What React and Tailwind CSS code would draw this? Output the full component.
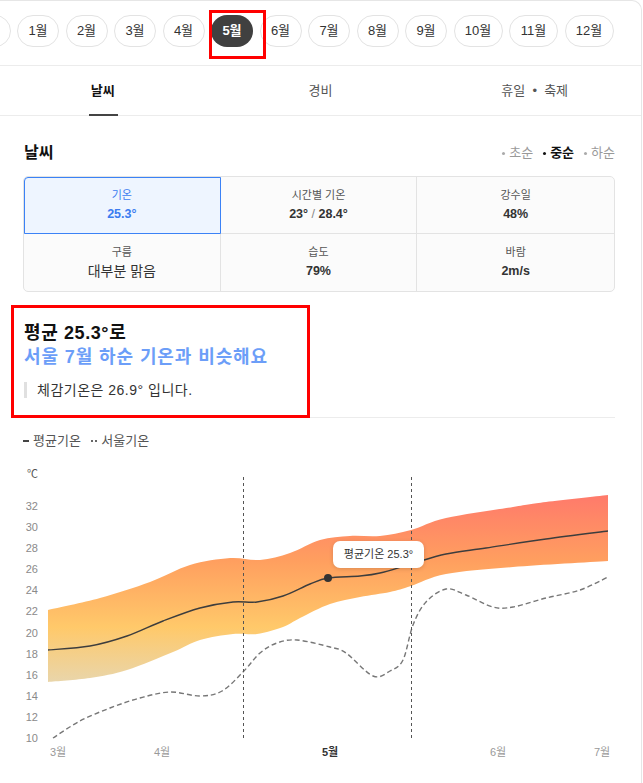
import React from "react";

const upper = [[48,610],[100,598],[150,582],[190,565],[230,558],[260,560],[290,553],[320,540],[350,536],[380,536],[411,530],[446,518],[513,507],[546,502],[608,495]];
const lower = [[48,682],[90,678],[127,670],[173,652],[200,640],[233,634],[257,634],[283,627],[300,618],[330,604],[360,597],[390,592],[411,586],[446,574],[513,567],[608,561]];
const mean = [[48,650],[90,646],[127,636],[163,621],[200,608],[233,602],[257,602],[283,596],[310,584],[328,578],[360,576],[380,573],[411,564],[446,554],[486,548],[546,539],[608,531]];
const seoul = [[53,738],[80,721],[110,708],[140,698],[170,692],[200,696],[222,691],[243,672],[260,653],[277,643],[297,640],[330,647],[346,653],[373,676],[390,671],[403,660],[413,625],[426,602],[446,589],[466,595],[493,607],[513,607],[546,598],[580,590],[608,577]];

function curve(p, move = true) {
  let d = (move ? "M" : "L") + p[0][0] + "," + p[0][1];
  for (let i = 0; i < p.length - 1; i++) {
    const p0 = p[i - 1] || p[i];
    const p1 = p[i];
    const p2 = p[i + 1];
    const p3 = p[i + 2] || p2;
    const c1x = p1[0] + (p2[0] - p0[0]) / 6;
    const c1y = p1[1] + (p2[1] - p0[1]) / 6;
    const c2x = p2[0] - (p3[0] - p1[0]) / 6;
    const c2y = p2[1] - (p3[1] - p1[1]) / 6;
    d += ` C${c1x},${c1y} ${c2x},${c2y} ${p2[0]},${p2[1]}`;
  }
  return d;
}

const months = ["1월","2월","3월","4월","5월","6월","7월","8월","9월","10월","11월","12월"];
const FONT = "'Liberation Sans', 'Noto Sans CJK KR', sans-serif";

function Chart() {
  const band = curve(upper) + " " + curve([...lower].reverse(), false) + " Z";
  const yl = [32,30,28,26,24,22,20,18,16,14,12,10];
  const xl = [["3월",58,false],["4월",162,false],["5월",330,true],["6월",498,false],["7월",602,false]];
  return (
    <div className="relative h-[328px]">
      <svg width="643" height="328" viewBox="0 455 643 328" className="block">
        <defs>
          <linearGradient id="bandg" gradientUnits="userSpaceOnUse" x1="0" y1="495" x2="0" y2="684">
            <stop offset="0" stopColor="#ff7a6b" />
            <stop offset="0.35" stopColor="#ff9f5f" />
            <stop offset="0.7" stopColor="#ffc96a" />
            <stop offset="1" stopColor="#e8d6ad" />
          </linearGradient>
        </defs>
        <text x="27" y="478" fontSize="11" fill="#555" fontFamily={FONT}>℃</text>
        {yl.map((v, i) => (
          <text key={v} x="38" y={510 + i * 21.09} fontSize="11" fill="#8a8a8a" textAnchor="end" fontFamily={FONT}>{v}</text>
        ))}
        <path d={band} fill="url(#bandg)" />
        <path d={curve(mean)} fill="none" stroke="#3d3d3d" strokeWidth="1.4" />
        <path d={curve(seoul)} fill="none" stroke="#777" strokeWidth="1.4" strokeDasharray="5 3" />
        <line x1="243.5" y1="477" x2="243.5" y2="738" stroke="#555" strokeWidth="1" strokeDasharray="3 3" />
        <line x1="411.5" y1="477" x2="411.5" y2="738" stroke="#555" strokeWidth="1" strokeDasharray="3 3" />
        <circle cx="328" cy="578" r="4" fill="#333" />
        {xl.map(([t, x, b]) => (
          <text key={t} x={x} y="756" fontSize="11" textAnchor="middle" fill={b ? "#333" : "#999"} fontWeight={b ? 700 : 400} fontFamily={FONT}>{t}</text>
        ))}
      </svg>
      <div className="absolute left-[333px] top-[86px] w-[91px] h-[27px] bg-white rounded-[7px] shadow-[0_1px_4px_rgba(0,0,0,0.15)] flex items-center justify-center text-[11px] text-[#333] leading-none">
        평균기온 25.3°
      </div>
    </div>
  );
}

function Cell({ label, value, active, big, border }) {
  return (
    <div className={`flex flex-col items-center justify-center h-[57px] ${border} ${active ? "bg-[#eef5ff] outline outline-1 outline-[#3b82f6] -outline-offset-1 rounded-tl-[4px] relative" : ""}`}>
      <div className={`text-[11px] leading-[16px] ${active ? "text-[#3b7cf0]" : "text-[#555]"}`}>{label}</div>
      <div className={`${big ? "text-[14px] font-normal leading-[20px]" : "text-[12.5px] font-semibold leading-[20px]"} mt-[1px] ${active ? "text-[#3b7cf0]" : "text-[#333]"}`}>{value}</div>
    </div>
  );
}

function Dot({ dark }) {
  return <span className={`inline-block w-[3px] h-[3px] rounded-full mr-[4px] ${dark ? "bg-[#111]" : "bg-[#aaa]"}`} />;
}

export default function App() {
  return (
    <div className="w-[643px] h-[783px] overflow-hidden bg-white relative" style={{ fontFamily: FONT }}>
      <div className="w-[642px] h-[783px] border-r border-t border-[#e6e6e6] rounded-tr-[10px] overflow-hidden">
        {/* month bar */}
        <div className="h-[65px] border-b border-[#ececec] flex items-start pt-[14px]">
          <div className="flex gap-[6.5px] ml-[-31.5px]">
            <div className="w-[42px] h-[32px] rounded-full border border-[#e3e3e3]" />
            {months.map((m) => {
              const active = m === "5월";
              const w = m.length > 2 ? "w-[49px]" : "w-[42px]";
              return (
                <div key={m} className={`${w} h-[32px] rounded-full flex items-center justify-center text-[13px] ${active ? "bg-[#404040] text-white font-bold" : "border border-[#e3e3e3] text-[#333]"}`}>
                  {m}
                </div>
              );
            })}
          </div>
        </div>
        {/* tabs */}
        <div className="h-[50px] border-b border-[#ececec] grid grid-cols-3">
          <div className="flex justify-center">
            <div className="relative h-full flex items-center px-[1px] text-[13px] font-bold text-[#111] mr-[8px]">
              날씨
              <div className="absolute left-[-1px] right-[-2px] bottom-[-1px] h-[2px] bg-[#444]" />
            </div>
          </div>
          <div className="flex items-center justify-center text-[13px] text-[#555]">경비</div>
          <div className="flex items-center justify-center text-[13px] text-[#555] ml-[1px]">휴일 &nbsp;•&nbsp; 축제</div>
        </div>
        {/* weather */}
        <div className="pl-[23px] pr-[26px] pt-[25px]">
          <div className="flex items-center justify-between h-[24px] pl-[1px]">
            <div className="text-[16px] font-bold text-[#111]">날씨</div>
            <div className="flex items-center gap-[10px] text-[13px]">
              <span className="flex items-center text-[#999]"><Dot />초순</span>
              <span className="flex items-center text-[#111] font-bold"><Dot dark />중순</span>
              <span className="flex items-center text-[#999]"><Dot />하순</span>
            </div>
          </div>
          <div className="mt-[11px] border border-[#e3e3e3] rounded-[5px] bg-[#fbfbfb] grid grid-cols-3">
            <Cell label="기온" value="25.3°" active border="border-r border-b border-[#e3e3e3]" />
            <Cell label="시간별 기온" value={<span>23° <span className="font-normal text-[#888]">/</span> 28.4°</span>} border="border-r border-b border-[#e3e3e3]" />
            <Cell label="강수일" value="48%" border="border-b border-[#e3e3e3]" />
            <Cell label="구름" value="대부분 맑음" big border="border-r border-[#e3e3e3]" />
            <Cell label="습도" value="79%" border="border-r border-[#e3e3e3]" />
            <Cell label="바람" value="2m/s" border="" />
          </div>
          {/* highlight */}
          <div className="pt-[29px] pb-[17px] border-b border-[#ececec] pl-[1px]">
            <div className="text-[18px] font-bold leading-[24px] tracking-[0.6px] text-[#111]">평균 25.3°로</div>
            <div className="text-[18px] font-bold leading-[24px] tracking-[0.9px] text-[#6c9ef8]">서울 7월 하순 기온과 비슷해요</div>
            <div className="mt-[11px] flex items-center h-[20px]">
              <div className="w-[3px] h-[16px] bg-[#e0e0e0]" />
              <div className="ml-[10px] text-[14px] tracking-[0.5px] text-[#333]">체감기온은 26.9° 입니다.</div>
            </div>
          </div>
          <div className="mt-[14px] flex items-center h-[18px] text-[13px] text-[#555]">
            <span className="w-[6px] h-[2.5px] bg-[#444] mr-[4px]" />
            <span>평균기온</span>
            <span className="ml-[10px] mr-[4px] flex gap-[1.5px]">
              <span className="w-[2.5px] h-[2.5px] bg-[#666]" />
              <span className="w-[2.5px] h-[2.5px] bg-[#666]" />
            </span>
            <span>서울기온</span>
          </div>
        </div>
        <div className="mt-[5px]">
          <Chart />
        </div>
      </div>
      {/* annotation boxes */}
      <div className="absolute left-[209px] top-[10px] w-[57px] h-[49px] border-[3px] border-[#ff0000] pointer-events-none" />
      <div className="absolute left-[11px] top-[305px] w-[299px] h-[113px] border-[3px] border-[#ff0000] pointer-events-none" />
    </div>
  );
}
